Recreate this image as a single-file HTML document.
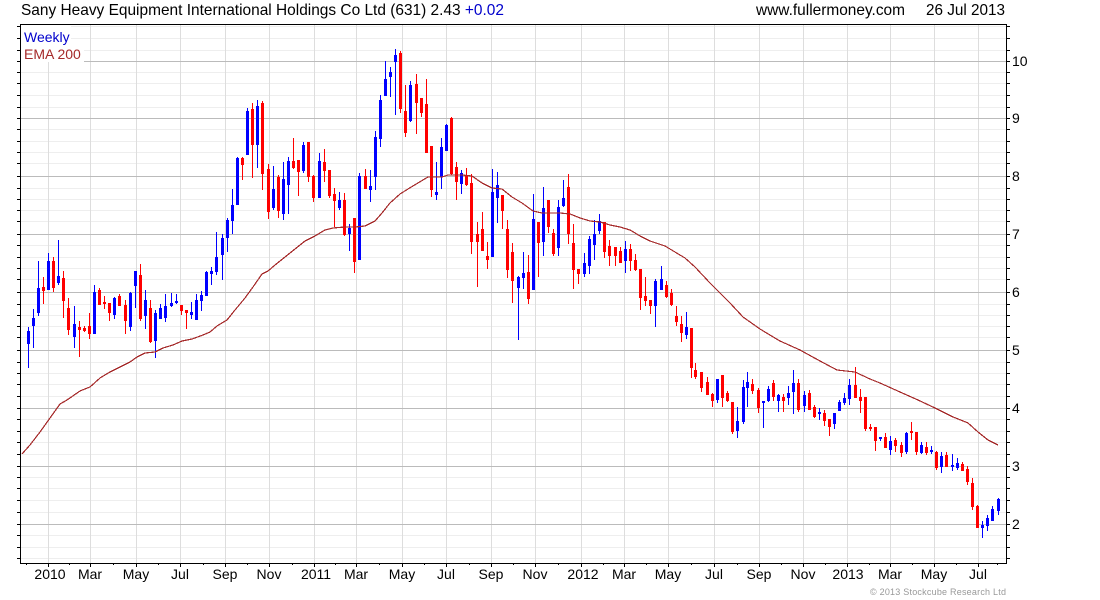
<!DOCTYPE html>
<html><head><meta charset="utf-8"><title>Sany Heavy Equipment</title>
<style>html,body{margin:0;padding:0;background:#fff;width:1100px;height:600px;overflow:hidden}svg{display:block}text{font-family:"Liberation Sans",Arial,sans-serif;font-size:14px;fill:#000}</style></head>
<body>
<svg width="1100" height="600" viewBox="0 0 1100 600" xmlns="http://www.w3.org/2000/svg">
<g shape-rendering="crispEdges" fill="none">
<path stroke="#000" d="M17 26.5H1010M17 38.5H1010M17 50.5H1010M17 61.5H1010M17 72.5H1010M17 83.5H1010M17 95.5H1010M17 107.5H1010M17 118.5H1010M17 129.5H1010M17 141.5H1010M17 152.5H1010M17 163.5H1010M17 176.5H1010M17 188.5H1010M17 199.5H1010M17 210.5H1010M17 221.5H1010M17 234.5H1010M17 245.5H1010M17 257.5H1010M17 268.5H1010M17 279.5H1010M17 292.5H1010M17 304.5H1010M17 315.5H1010M17 326.5H1010M17 337.5H1010M17 350.5H1010M17 362.5H1010M17 373.5H1010M17 384.5H1010M17 396.5H1010M17 408.5H1010M17 419.5H1010M17 431.5H1010M17 442.5H1010M17 454.5H1010M17 466.5H1010M17 477.5H1010M17 488.5H1010M17 500.5H1010M17 512.5H1010M17 524.5H1010M17 535.5H1010M17 547.5H1010M17 558.5H1010"/>
<rect x="21" y="25" width="985" height="538" fill="#fff" stroke="none"/>
<path stroke="#eee" d="M21 26.5H1006M21 38.5H1006M21 50.5H1006M21 72.5H1006M21 83.5H1006M21 95.5H1006M21 107.5H1006M21 129.5H1006M21 141.5H1006M21 152.5H1006M21 163.5H1006M21 188.5H1006M21 199.5H1006M21 210.5H1006M21 221.5H1006M21 245.5H1006M21 257.5H1006M21 268.5H1006M21 279.5H1006M21 304.5H1006M21 315.5H1006M21 326.5H1006M21 337.5H1006M21 362.5H1006M21 373.5H1006M21 384.5H1006M21 396.5H1006M21 419.5H1006M21 431.5H1006M21 442.5H1006M21 454.5H1006M21 477.5H1006M21 488.5H1006M21 500.5H1006M21 512.5H1006M21 535.5H1006M21 547.5H1006M21 558.5H1006"/>
<path stroke="#ddd" d="M48.5 25V563M90.5 25V563M136.5 25V563M180.5 25V563M225.5 25V563M269.5 25V563M314.5 25V563M356.5 25V563M402.5 25V563M446.5 25V563M491.5 25V563M535.5 25V563M581.5 25V563M624.5 25V563M668.5 25V563M714.5 25V563M759.5 25V563M803.5 25V563M847.5 25V563M890.5 25V563M934.5 25V563M978.5 25V563"/>
<path stroke="#bbb" d="M21 61.5H1006M21 118.5H1006M21 176.5H1006M21 234.5H1006M21 292.5H1006M21 350.5H1006M21 408.5H1006M21 466.5H1006M21 524.5H1006"/>
<rect x="21" y="25" width="50" height="19" fill="#fff" stroke="none"/>
<rect x="21" y="44" width="63" height="18" fill="#fff" stroke="none"/>
<path stroke="#000" d="M20.5 24.5H1006.5V563.5H20.5Z"/>
<path stroke="#000" d="M48.5 564V567M90.5 564V567M136.5 564V567M180.5 564V567M225.5 564V567M269.5 564V567M314.5 564V567M356.5 564V567M402.5 564V567M446.5 564V567M491.5 564V567M535.5 564V567M581.5 564V567M624.5 564V567M668.5 564V567M714.5 564V567M759.5 564V567M803.5 564V567M847.5 564V567M890.5 564V567M934.5 564V567M978.5 564V567M26.5 564V565M69.5 564V565M113.5 564V565M158.5 564V565M203.5 564V565M247.5 564V565M292.5 564V565M335.5 564V565M379.5 564V565M424.5 564V565M469.5 564V565M513.5 564V565M558.5 564V565M603.5 564V565M646.5 564V565M691.5 564V565M737.5 564V565M781.5 564V565M825.5 564V565M869.5 564V565M912.5 564V565M956.5 564V565M997.5 564V565"/>

<!-- blue wicks -->
<path stroke="#00f" d="M28.5 327V368M33.5 309V348M38.5 261V316M48.5 253V290M58.5 240V285M74.5 306V348M94.5 285V334M114.5 297V319M130.5 292V331M135.5 271V308M145.5 290V329M155.5 310V358M160.5 304V319M165.5 294V322M171.5 293V307M176.5 294V304M191.5 302V319M196.5 294V320M201.5 291V311M206.5 271V296M211.5 267V285M216.5 232V275M222.5 234V280M227.5 218V252M232.5 189V234M237.5 157V205M247.5 108V155M257.5 100V168M273.5 166V210M283.5 162V220M288.5 157V214M303.5 142V173M319.5 153V198M339.5 192V210M349.5 224V251M359.5 173V260M370.5 170V202M375.5 131V190M380.5 95V147M385.5 61V96M390.5 67V97M395.5 49V115M410.5 81V122M436.5 162V200M441.5 138V189M446.5 124V151M461.5 170V194M492.5 169V257M497.5 172V223M518.5 276V340M523.5 252V289M533.5 194V290M543.5 187V256M558.5 200V256M563.5 180V207M584.5 253V277M589.5 236V274M594.5 220V260M599.5 214V234M625.5 241V273M655.5 279V327M661.5 266V290M686.5 312V339M717.5 379V403M737.5 407V438M743.5 380V424M747.5 372V407M763.5 401V428M768.5 386V402M778.5 394V412M788.5 386V405M793.5 370V414M804.5 391V412M819.5 408V420M834.5 413V429M839.5 400V411M844.5 393V405M849.5 379V405M880.5 437V441M890.5 436V455M906.5 432V454M921.5 442V454M931.5 446V454M941.5 452V473M952.5 454V471M957.5 458V470M982.5 521V538M987.5 515V531M992.5 506V521M998.5 498V515"/>
<!-- blue bodies -->
<path stroke="#00f" stroke-width="3" d="M28.5 331V344M33.5 318V326M38.5 288V313M48.5 261V290M58.5 276V283M74.5 324V337M94.5 292V334M114.5 298V315M130.5 293V327M135.5 271V286M145.5 300V316M155.5 313V341M160.5 308V319M165.5 306V318M171.5 303V306M176.5 301V303M191.5 312V315M196.5 300V320M201.5 295V301M206.5 272V296M211.5 271V274M216.5 257V272M222.5 238V255M227.5 220V238M232.5 205V221M237.5 158V205M247.5 111V155M257.5 106V145M273.5 189V208M283.5 179V214M288.5 161V185M303.5 145V171M319.5 161V198M339.5 200V208M349.5 228V234M359.5 176V260M370.5 186V190M375.5 137V177M380.5 100V139M385.5 79V96M390.5 72V77M395.5 55V62M410.5 85V121M436.5 192V195M441.5 147V177M446.5 125V151M461.5 173V184M492.5 192V257M497.5 185V198M518.5 277V288M523.5 273V278M533.5 219V290M543.5 208V242M558.5 207V248M563.5 198V206M584.5 263V274M589.5 239V266M594.5 234V245M599.5 221V231M625.5 249V261M655.5 281V306M661.5 279V290M686.5 327V335M717.5 379V400M737.5 421V431M743.5 387V422M747.5 382V388M763.5 401V403M768.5 389V401M778.5 395V401M788.5 393V398M793.5 383V392M804.5 395V406M819.5 412V414M834.5 413V424M839.5 402V411M844.5 398V403M849.5 385V399M880.5 437V439M890.5 441V450M906.5 433V452M921.5 445V453M931.5 450V452M941.5 456V467M952.5 465V467M957.5 463V468M982.5 525V528M987.5 518V526M992.5 509V521M998.5 499V511"/>
<!-- red wicks -->
<path stroke="#f00" d="M43.5 277V304M53.5 257V292M63.5 271V318M68.5 298V335M79.5 321V357M84.5 326V332M89.5 313V339M99.5 288V305M104.5 296V309M109.5 303V321M119.5 294V306M125.5 300V334M140.5 264V321M150.5 300V343M181.5 305V315M186.5 310V329M242.5 157V180M252.5 103V178M262.5 101V190M268.5 164V219M278.5 175V218M293.5 138V169M298.5 160V196M308.5 142V182M313.5 175V202M324.5 149V182M329.5 170V198M334.5 188V227M344.5 193V236M354.5 218V273M365.5 169V189M400.5 51V113M405.5 85V137M416.5 74V134M421.5 98V117M426.5 79V153M431.5 146V197M451.5 117V175M456.5 162V200M466.5 168V186M471.5 174V254M477.5 222V287M482.5 212V251M487.5 242V269M502.5 195V229M507.5 220V278M512.5 243V303M528.5 255V304M538.5 222V277M548.5 200V233M553.5 229V256M568.5 174V244M573.5 224V289M578.5 269V284M604.5 222V258M609.5 240V266M615.5 247V266M620.5 247V263M630.5 244V271M635.5 254V271M640.5 269V310M645.5 277V306M650.5 300V314M666.5 281V298M671.5 289V306M676.5 306V326M681.5 316V342M691.5 328V378M695.5 363V379M701.5 372V392M707.5 377V395M712.5 393V407M722.5 375V407M727.5 391V402M732.5 402V434M752.5 379V394M758.5 388V413M773.5 380V401M783.5 394V412M798.5 379V412M809.5 390V410M814.5 405V418M824.5 410V426M829.5 419V436M855.5 367V398M860.5 389V413M865.5 397V431M870.5 424V431M875.5 427V451M885.5 433V448M895.5 438V452M901.5 442V457M911.5 422V440M916.5 432V455M926.5 442V455M936.5 451V470M946.5 452V467M962.5 462V471M967.5 466V485M972.5 478V510M977.5 505V528"/>
<!-- red bodies -->
<path stroke="#f00" stroke-width="3" d="M43.5 287V291M53.5 261V288M63.5 278V301M68.5 308V330M79.5 327V330M84.5 328V331M89.5 326V334M99.5 290V305M104.5 302V304M109.5 303V313M119.5 296V306M125.5 305V321M140.5 275V319M150.5 308V342M181.5 305V311M186.5 310V313M242.5 158V165M252.5 109V145M262.5 103V174M268.5 169V212M278.5 177V211M293.5 161V168M298.5 160V172M308.5 142V177M313.5 176V198M324.5 162V171M329.5 170V196M334.5 194V201M344.5 200V235M354.5 218V262M365.5 176V189M400.5 53V109M405.5 111V133M416.5 84V103M421.5 98V113M426.5 104V153M431.5 146V190M451.5 118V174M456.5 167V182M466.5 175V185M471.5 183V242M477.5 234V242M482.5 229V251M487.5 256V260M502.5 195V211M507.5 229V270M512.5 252V281M528.5 272V299M538.5 222V243M548.5 200V227M553.5 233V254M568.5 187V234M573.5 243V270M578.5 269V274M604.5 222V252M609.5 246V256M615.5 247V256M620.5 251V263M630.5 249V261M635.5 260V270M640.5 269V298M645.5 296V301M650.5 300V306M666.5 285V297M671.5 293V305M676.5 316V322M681.5 324V333M691.5 328V368M695.5 370V377M701.5 372V388M707.5 382V395M712.5 394V401M722.5 375V398M727.5 393V401M732.5 402V432M752.5 384V391M758.5 390V408M773.5 383V397M783.5 397V401M798.5 383V410M809.5 393V410M814.5 407V417M824.5 413V421M829.5 419V427M855.5 385V398M860.5 397V401M865.5 397V429M870.5 427V429M875.5 427V441M885.5 437V448M895.5 440V446M901.5 445V453M911.5 431V433M916.5 432V452M926.5 447V453M936.5 452V468M946.5 455V467M962.5 464V471M967.5 469V482M972.5 483V507M977.5 506V528"/>
<!-- EMA -->
<path stroke="#a52a2a" stroke-width="1.2" d="M22 454L30 445L40 432L50 418L60 404L67 400L80 391L90 387L100 378L110 372L120 367L130 362L137 357L145 353L155 352L163 348L173 345L182 341L192 339L203 335L210 332L217 326L227 320L235 310L245 298L253 287L262 274L268 271L275 265L285 257L295 249L305 241L315 236L325 230L333 228L345 227L355 227L365 226L375 221L382 213L390 203L400 194L408 189L418 183L428 177L442 177L448 175L462 175L472 176L482 183L492 188L502 189L512 197L522 203L533 211L542 213L550 213L560 213L570 214L580 218L590 221L600 222L610 225L620 227L630 230L640 236L650 241L665 246L675 252L685 258L695 267L710 283L720 293L730 303L743 317L760 329L780 341L800 350L820 361L837 370L855 372L870 379L880 383L900 392L918 400L935 408L953 417L968 423L978 432L988 440L998 445"/>
</g>

<text x="21" y="15" style="font-size:16px" textLength="483" lengthAdjust="spacingAndGlyphs">Sany Heavy Equipment International Holdings Co Ltd (631) 2.43 <tspan fill="#00c">+0.02</tspan></text>
<text x="756" y="15" style="font-size:16px" textLength="149" lengthAdjust="spacingAndGlyphs">www.fullermoney.com</text>
<text x="926" y="15" style="font-size:16px" textLength="79" lengthAdjust="spacingAndGlyphs">26 Jul 2013</text>
<text x="24" y="42" style="fill:#00c">Weekly</text>
<text x="24" y="59" style="fill:#a52a2a">EMA 200</text>

<g>
<text x="1012" y="66">10</text><text x="1012" y="123">9</text><text x="1012" y="181">8</text><text x="1012" y="239">7</text><text x="1012" y="297">6</text><text x="1012" y="355">5</text><text x="1012" y="413">4</text><text x="1012" y="471">3</text><text x="1012" y="529">2</text>
</g>
<g text-anchor="middle">
<text x="50" y="579">2010</text><text x="90" y="579">Mar</text><text x="136" y="579">May</text><text x="180" y="579">Jul</text><text x="225" y="579">Sep</text><text x="269" y="579">Nov</text><text x="316" y="579">2011</text><text x="356" y="579">Mar</text><text x="402" y="579">May</text><text x="446" y="579">Jul</text><text x="491" y="579">Sep</text><text x="535" y="579">Nov</text><text x="583" y="579">2012</text><text x="624" y="579">Mar</text><text x="668" y="579">May</text><text x="714" y="579">Jul</text><text x="759" y="579">Sep</text><text x="803" y="579">Nov</text><text x="848" y="579">2013</text><text x="890" y="579">Mar</text><text x="934" y="579">May</text><text x="978" y="579">Jul</text>
</g>
<text x="870" y="595" style="font-size:9px;fill:#999" textLength="136" lengthAdjust="spacing">© 2013 Stockcube Research Ltd</text>
</svg>
</body></html>
